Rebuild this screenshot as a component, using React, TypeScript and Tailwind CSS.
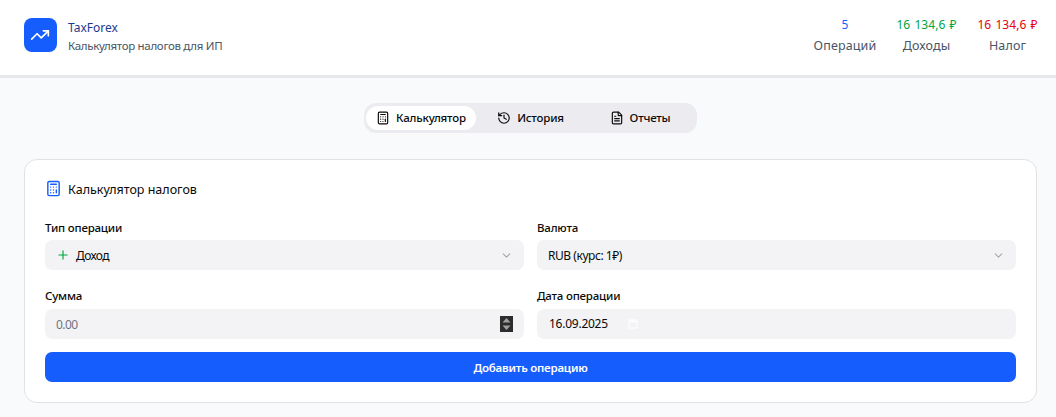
import type { ReactNode } from "react";
import { Calculator, ChevronDown, FileText, History, Plus, TrendingUp } from "lucide-react";

function Stat({ value, label, width, tone }: { value: string; label: string; width: string; tone: string }) {
  return (
    <div className={`flex flex-col items-center ${width}`}>
      <div className={`h-5 text-[12px] leading-5 tracking-[0.05px] [word-spacing:1px] ${tone}`}>{value}</div>
      <div className="h-5 text-[12.5px] leading-[22px] tracking-[0.15px] text-[#4a5565]">{label}</div>
    </div>
  );
}

function Field({ label, gap = "mt-px", children }: { label: string; gap?: string; children: ReactNode }) {
  return (
    <div className="flex flex-col">
      <div className="h-[23px] text-[11.5px] font-medium leading-[23px] tracking-[-0.2px]">{label}</div>
      <div className={`flex h-[30px] items-center rounded-[7px] bg-[#f3f3f5] pl-[11px] pr-[11px] text-[12px] ${gap}`}>{children}</div>
    </div>
  );
}

export default function App() {
  return (
    <div className="flex h-[417px] w-[1056px] flex-col overflow-hidden whitespace-nowrap bg-[#f9fafb] font-['Noto_Sans',sans-serif] text-[#0a0a0a]">
      <header className="flex h-[78px] shrink-0 items-start justify-between border-b-3 border-[#e5e7eb] bg-white pl-6 pr-[18px]">
        <div className="flex">
          <div className="mt-[18px] flex h-[34px] w-[33px] items-center justify-center rounded-[8px] bg-[#155dfc] pr-px">
            <TrendingUp size={20} strokeWidth={2} className="text-white" />
          </div>
          <div className="ml-[11px] mt-[18px]">
            <div className="h-5 text-[12px] leading-5 text-[#1c398e]">TaxForex</div>
            <div className="h-4 text-[11.5px] leading-4 tracking-[-0.31px] text-[#4a5565]">Калькулятор налогов для ИП</div>
          </div>
        </div>
        <div className="mt-[15px] flex">
          <Stat value="5" label="Операций" width="w-[64px]" tone="text-[#155dfc]" />
          <Stat value="16 134,6 ₽" label="Доходы" width="ml-[19px] w-[61px]" tone="text-[#00a63e]" />
          <Stat value="16 134,6 ₽" label="Налог" width="ml-[20px] w-[61px]" tone="text-[#e7000b]" />
        </div>
      </header>

      <main className="flex flex-col items-center pl-[5px] pt-[25px]">
        <nav className="flex h-[30px] w-[333px] items-center rounded-[12px] bg-[#ececf0] px-0.5 text-[11.5px] font-medium tracking-[-0.2px]">
          <div className="flex h-6 w-[110px] items-center justify-center gap-1.5 rounded-[12px] bg-white">
            <Calculator size={14} />
            <span>Калькулятор</span>
          </div>
          <div className="flex h-6 w-[109px] items-center justify-center gap-1.5">
            <History size={14} />
            <span>История</span>
          </div>
          <div className="flex h-6 w-[110px] items-center justify-center gap-1.5">
            <FileText size={14} />
            <span>Отчеты</span>
          </div>
        </nav>

        <section className="mt-[26px] h-[244px] w-[1013px] rounded-[13px] border border-[#e1e2e4] bg-white px-5">
          <div className="mt-5 flex h-[18px] items-start gap-[6px]">
            <Calculator size={17} className="text-[#155dfc]" />
            <h2 className="text-[12.5px] leading-5">Калькулятор налогов</h2>
          </div>
          <div className="mt-[18px] grid grid-cols-2 gap-x-[13px] gap-y-3.5">
            <Field label="Тип операции">
              <Plus size={14} className="text-[#00a63e]" />
              <span className="ml-[6px] pt-0.5 tracking-[-0.6px]">Доход</span>
              <ChevronDown size={13} className="ml-auto text-[#a6a6aa]" />
            </Field>
            <Field label="Валюта">
              <span className="pt-0.5 tracking-[-0.45px]">RUB (курс: 1₽)</span>
              <ChevronDown size={13} className="ml-auto text-[#a6a6aa]" />
            </Field>
            <Field label="Сумма" gap="mt-0.5">
              <span className="pt-0.5 tracking-[-0.55px] text-[#717182]">0.00</span>
              <svg className="ml-auto" width="13" height="16" viewBox="0 0 13 16">
                <path d="M0 0h13v16H0z" fill="#2c2c2c" />
                <path d="M2.5 6.5 6.5 2l4 4.5zM2.5 9.5l4 4.5 4-4.5z" fill="#a0a0a0" />
              </svg>
            </Field>
            <Field label="Дата операции" gap="mt-0.5">
              <span className="pl-px tracking-[-0.25px]">16.09.2025</span>
              <svg className="ml-5" width="10" height="10" viewBox="0 0 10 10">
                <path d="M1 1h8v8H1z" fill="none" stroke="#fcfcfd" strokeWidth="1.5" />
                <path d="M1 2.5h8" stroke="#fcfcfd" strokeWidth="2" />
              </svg>
            </Field>
          </div>
          <button className="mt-[13px] flex h-[30px] w-full items-center justify-center rounded-[7px] bg-[#155dfc] pt-px text-[11.5px] font-semibold tracking-[-0.24px] text-white">
            Добавить операцию
          </button>
        </section>
      </main>
    </div>
  );
}
